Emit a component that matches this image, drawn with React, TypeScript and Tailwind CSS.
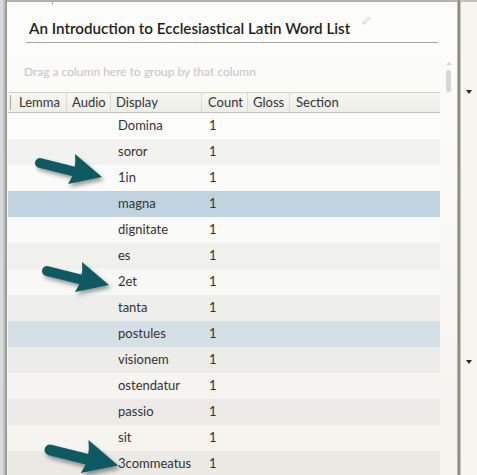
import React from "react";

const rows: { text: string; bg: string }[] = [
  { text: "Domina", bg: "bg-[#fcfcfa]" },
  { text: "soror", bg: "bg-[#f2f2f0]" },
  { text: "1in", bg: "bg-[#fbfbf9]" },
  { text: "magna", bg: "bg-[#c0d4df]" },
  { text: "dignitate", bg: "bg-[#fafaf7]" },
  { text: "es", bg: "bg-[#f0f0ec]" },
  { text: "2et", bg: "bg-[#f8f8f4]" },
  { text: "tanta", bg: "bg-[#eeeeea]" },
  { text: "postules", bg: "bg-[#d3e0e6]" },
  { text: "visionem", bg: "bg-[#ecece8]" },
  { text: "ostendatur", bg: "bg-[#f5f4f0]" },
  { text: "passio", bg: "bg-[#ebeae6]" },
  { text: "sit", bg: "bg-[#f5f4ef]" },
  { text: "3commeatus", bg: "bg-[#eae9e4]" },
];

function Arrow({ x, y, s = 1 }: { x: number; y: number; s?: number }) {
  return (
    <g transform={`translate(${x},${y}) scale(${s})`} filter="url(#sh)">
      <line x1="0" y1="0" x2="40" y2="10" stroke="#0f5a63" strokeWidth="10" strokeLinecap="round" />
      <path d="M35,-9 L62,14 L28,21 Q37,8 35,-9 Z" fill="#0f5a63" />
    </g>
  );
}

export default function App() {
  const font = { fontFamily: "Lato, 'Open Sans', sans-serif" };
  return (
    <div
      className="relative flex w-[477px] h-[475px] overflow-hidden bg-[#fcfcfa] text-[#333]"
      style={font}
    >
      {/* left strip */}
      <div className="flex w-[7px] shrink-0">
        <div className="w-[3px] bg-[#d6dbe0]" />
        <div className="w-[2px] bg-[#c4c4be]" />
        <div className="w-[2px] bg-[#9c9c96]" />
      </div>

      {/* main panel */}
      <div className="relative flex flex-col w-[450px] shrink-0 border-t-2 border-[#b4b3ab] bg-gradient-to-b from-[#fdfdfb] to-[#f4f3ee]">
        <div className="absolute left-[45px] top-0 w-[1px] h-[3px] bg-[#b4b3ab]" />
        {/* title */}
        <div className="ml-[19px] mr-[19px] mt-[16px] border-b border-[#a9a9a4] pb-[4px] pl-[3px] flex items-start">
          <span className="text-[15.2px] font-semibold leading-[20px] text-[#1f1f1f]">
            An Introduction to Ecclesiastical Latin Word List
          </span>
          <svg width="9" height="9" viewBox="0 0 9 9" className="ml-[12px] mt-[-2px]">
            <path d="M1,8 L1.5,6 L6.5,1 L8,2.5 L3,7.5 Z" fill="none" stroke="#c4c4c0" strokeWidth="0.9" />
          </svg>
        </div>

        {/* group hint + scroll */}
        <div className="flex">
          <div className="flex-1 flex flex-col">
            <div className="h-[49px] pl-[17px] pt-[22px] text-[12px] leading-[14px] text-[#c6c5bd]">
              Drag a column here to group by that column
            </div>
            {/* header */}
            <div className="ml-[1px] w-[432px] h-[21px] flex border-t border-b border-[#d2d1c8] border-b-[#c3c2b8] bg-gradient-to-b from-[#f7f7f3] to-[#eeeee8] text-[13px] leading-[19px] text-[#333]">
              <div className="w-[5px] flex justify-center">
                <div className="w-[1px] mt-[2px] h-[15px] bg-[#aaa9a0]" />
              </div>
              <div className="w-[54px] pl-[6px] border-r border-[#dcdbd2]">Lemma</div>
              <div className="w-[44px] pl-[5px] border-r border-[#dcdbd2]">Audio</div>
              <div className="w-[91px] pl-[5px] border-r border-[#dcdbd2]">Display</div>
              <div className="w-[46px] pl-[6px] border-r border-[#dcdbd2]">Count</div>
              <div className="w-[42px] pl-[5px] border-r border-[#dcdbd2]">Gloss</div>
              <div className="flex-1 pl-[6px]">Section</div>
            </div>
            {/* rows */}
            <div className="ml-[1px] w-[432px] flex flex-col text-[13px]">
              {rows.map((r) => (
                <div key={r.text} className={`h-[26px] flex items-center ${r.bg}`}>
                  <div className="w-[110px] shrink-0" />
                  <div className="w-[91px] shrink-0">{r.text}</div>
                  <div>1</div>
                </div>
              ))}
            </div>
          </div>
          {/* scrollbar */}
          <div className="w-[17px] flex flex-col items-center pt-[19px]">
            <div className="w-0 h-0 border-l-[3px] border-r-[3px] border-b-[3px] border-l-transparent border-r-transparent border-b-[#d4d4d0]" />
            <div className="mt-[5px] w-[5px] h-[22px] rounded-full bg-[#d6d6d2]" />
          </div>
        </div>
      </div>

      {/* divider */}
      <div className="w-[4px] shrink-0 flex">
        <div className="w-[1px] bg-[#b8b7ae]" />
        <div className="w-[2px] bg-[#8e8d84]" />
        <div className="w-[1px] bg-[#c8c7be]" />
      </div>

      {/* right panel */}
      <div className="flex-1 border-t-2 border-[#c4c3bb] bg-[#f6f5f0] flex flex-col items-center">
        <div className="mt-[88px] w-0 h-0 border-l-[3px] border-r-[3px] border-t-[4px] border-l-transparent border-r-transparent border-t-[#2a2a2a]" />
        <div className="mt-[266px] w-0 h-0 border-l-[3px] border-r-[3px] border-t-[4px] border-l-transparent border-r-transparent border-t-[#2a2a2a]" />
      </div>

      {/* arrows overlay */}
      <svg className="absolute left-0 top-0 pointer-events-none" width="477" height="475">
        <defs>
          <filter id="sh" x="-30%" y="-50%" width="160%" height="200%">
            <feDropShadow dx="2" dy="3" stdDeviation="2" floodColor="#000" floodOpacity="0.4" />
          </filter>
        </defs>
        <Arrow x={40} y={163} />
        <Arrow x={47} y={271} />
        <Arrow x={50} y={450} s={1.1} />
      </svg>
    </div>
  );
}
